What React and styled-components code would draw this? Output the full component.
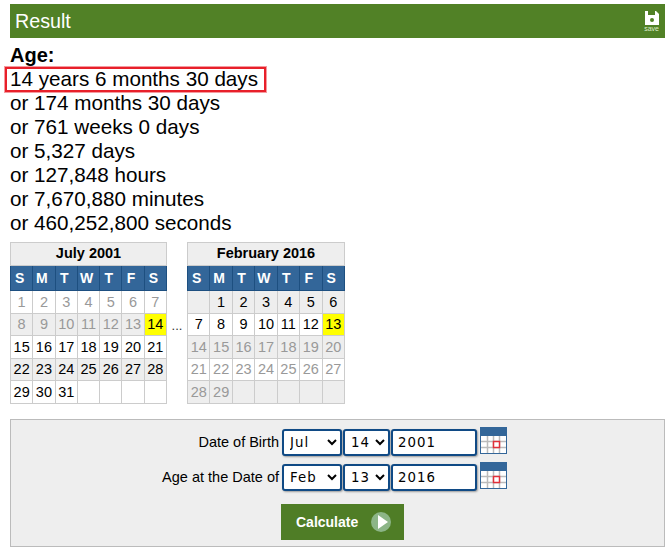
import React from "react"
import styled, { createGlobalStyle } from "styled-components"

const GlobalStyle = createGlobalStyle`
  body {
    margin: 0;
    background: #fff;
    font-family: "Liberation Sans", Arial, sans-serif;
    color: #000;
  }
`

const Page = styled.div`
  width: 655px;
  padding: 4px 2px 0 10px;
`

const Header = styled.div`
  height: 34px;
  background: #518126;
  display: flex;
  align-items: center;
  justify-content: space-between;
  padding: 0 6px 0 5px;
  color: #fff;
  font-size: 19.7px;
`

const SaveIcon = styled.div`
  display: flex;
  flex-direction: column;
  align-items: center;
  font-size: 7px;
  line-height: 7px;
  color: #dfeecb;
`

const Results = styled.div`
  font-size: 20.67px;
  line-height: 24px;
  margin-top: 5px;
`

const AgeTitle = styled.div`
  font-size: 20px;
  font-weight: bold;
`

const Highlight = styled.div`
  position: relative;

  &::after {
    content: "";
    position: absolute;
    left: -5px;
    top: 0;
    width: 257px;
    height: 21px;
    border: 2px solid #e8202a;
    box-shadow: 0 0 0 1px rgba(232, 32, 42, 0.45);
  }
`

const CalendarRow = styled.div`
  display: flex;
  align-items: flex-end;
  margin-top: 7px;
`

const Dots = styled.div`
  width: 20px;
  height: 86px;
  text-align: center;
  font-size: 13px;
  color: #333;
`

const CalendarTable = styled.table`
  border-collapse: collapse;
  table-layout: fixed;
  width: ${p => p.$width}px;
  font-size: 14.5px;
  text-align: center;

  td, th {
    border: 1px solid #ccc;
    padding: 0;
  }
`

const TitleCell = styled.th`
  height: 20px;
  background: #eee;
  font-size: 14.5px;
  && {
    padding-bottom: 2px;
  }
`

const DayHead = styled.th`
  height: 24px;
  background: #336699;
  color: #fff;
  font-size: 14px;
  && {
    border-color: #1d4f80;
    padding-right: 4px;
  }
`

const DayCell = styled.td`
  height: 21.5px;
  background: ${p => (p.$today ? "#ffff00" : p.$shade ? "#eee" : "#fff")};
  color: ${p => (p.$muted ? "#999" : "#000")};
`

const FormPanel = styled.div`
  margin-top: 15px;
  height: 128px;
  background: #eee;
  border: 1px solid #bbb;
  box-sizing: border-box;
  padding-top: 9px;
`

const FormRow = styled.div`
  display: flex;
  align-items: center;
  height: 27px;
  margin-bottom: 8px;
`

const Label = styled.label`
  width: 268px;
  text-align: right;
  font-size: 14.5px;
  margin-right: 3px;
`

const Field = styled.select`
  height: 27px;
  width: ${p => p.$width}px;
  margin-right: 1px;
  box-sizing: border-box;
  border: 2px solid #104a85;
  border-radius: 3px;
  background: #fff;
  font-family: "DejaVu Sans", sans-serif;
  font-size: 13.33px;
  letter-spacing: 1px;
  box-shadow: 1px 1px 2px rgba(0, 0, 0, 0.35);
  padding: 0 0 0 2px;
`

const YearInput = styled.input`
  height: 27px;
  width: 86px;
  box-sizing: border-box;
  border: 2px solid #104a85;
  border-radius: 3px;
  background: #fff;
  font-family: "DejaVu Sans", sans-serif;
  font-size: 13.33px;
  letter-spacing: 1px;
  box-shadow: 1px 1px 2px rgba(0, 0, 0, 0.35);
  padding: 0 0 0 5px;
`

const CalendarIcon = styled.svg`
  margin: -4px 0 0 3px;
  flex: none;
`

const ButtonRow = styled.div`
  display: flex;
  padding-left: 270px;
  margin-top: 13px;
`

const CalcButton = styled.button`
  width: 123px;
  height: 36px;
  background: #4f7d26;
  border: 0;
  color: #fff;
  font-family: "Liberation Sans", Arial, sans-serif;
  font-weight: bold;
  font-size: 14px;
  display: flex;
  align-items: center;
  padding: 0 0 0 15px;
  gap: 13px;
`

const july = { title: "July 2001", offset: 0, len: 31, sel: 14, muted: d => d < 14, shade: r => r % 2 === 1 }
const feb = { title: "February 2016", offset: 1, len: 29, sel: 13, muted: d => d > 13, shade: r => r % 2 === 0 }

const Calendar = ({ month, width }) => {
  const rows = []
  for (let r = 0; r < 5; r++) {
    const cells = []
    for (let c = 0; c < 7; c++) {
      const d = r * 7 + c + 1 - month.offset
      cells.push(d >= 1 && d <= month.len ? d : null)
    }
    rows.push(cells)
  }
  return (
    <CalendarTable $width={width}>
      <thead>
        <tr><TitleCell colSpan="7">{month.title}</TitleCell></tr>
        <tr>{["S", "M", "T", "W", "T", "F", "S"].map((d, i) => <DayHead key={i}>{d}</DayHead>)}</tr>
      </thead>
      <tbody>
        {rows.map((cells, r) => (
          <tr key={r}>
            {cells.map((d, c) => (
              <DayCell key={c} $today={d === month.sel} $shade={month.shade(r)} $muted={d && month.muted(d)}>{d}</DayCell>
            ))}
          </tr>
        ))}
      </tbody>
    </CalendarTable>
  )
}

const DateIcon = () => (
  <CalendarIcon width="27" height="27" viewBox="0 0 27 27">
    <rect x="0" y="0" width="27" height="27" fill="#336699" />
    <rect x="1" y="9" width="25" height="17" fill="#fff" />
    <path d="M7.5 9v17M13.5 9v17M19.5 9v17M1 14.5h25M1 20.5h25" stroke="#bbb" strokeWidth="1.5" fill="none" />
    <rect x="13.5" y="14.5" width="6" height="6" fill="#fff" stroke="#e0303a" strokeWidth="1.5" />
  </CalendarIcon>
)

const App = () => (
  <Page>
    <GlobalStyle />
    <Header>
      Result
      <SaveIcon>
        <svg width="14" height="14" viewBox="0 0 14 14">
          <path d="M0 0h11l3 3v11H0z" fill="#fff" />
          <rect x="3" y="0" width="7" height="4" fill="#518126" />
          <circle cx="7" cy="9" r="2" fill="#518126" />
        </svg>
        save
      </SaveIcon>
    </Header>
    <Results>
      <AgeTitle>Age:</AgeTitle>
      <Highlight>14 years 6 months 30 days</Highlight>
      <div>or 174 months 30 days</div>
      <div>or 761 weeks 0 days</div>
      <div>or 5,327 days</div>
      <div>or 127,848 hours</div>
      <div>or 7,670,880 minutes</div>
      <div>or 460,252,800 seconds</div>
    </Results>
    <CalendarRow>
      <Calendar month={july} width={157} />
      <Dots>...</Dots>
      <Calendar month={feb} width={158} />
    </CalendarRow>
    <FormPanel>
      <FormRow>
        <Label>Date of Birth</Label>
        <Field $width={60} defaultValue="Jul"><option>Jul</option></Field>
        <Field $width={47} defaultValue="14"><option>14</option></Field>
        <YearInput defaultValue="2001" />
        <DateIcon />
      </FormRow>
      <FormRow>
        <Label>Age at the Date of</Label>
        <Field $width={60} defaultValue="Feb"><option>Feb</option></Field>
        <Field $width={47} defaultValue="13"><option>13</option></Field>
        <YearInput defaultValue="2016" />
        <DateIcon />
      </FormRow>
      <ButtonRow>
        <CalcButton>
          Calculate
          <svg width="20" height="20" viewBox="0 0 20 20">
            <circle cx="10" cy="10" r="10" fill="#8cb587" />
            <path d="M7 3l10 7-10 7z" fill="#fff" />
          </svg>
        </CalcButton>
      </ButtonRow>
    </FormPanel>
  </Page>
)

export default App
